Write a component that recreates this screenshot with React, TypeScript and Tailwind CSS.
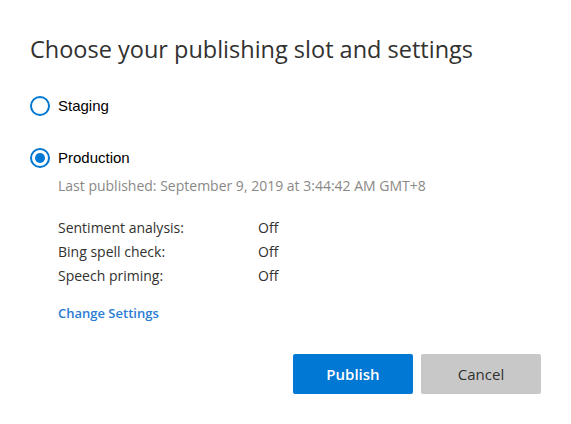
import React from 'react'

const SETTINGS = [
  { label: 'Sentiment analysis:', value: 'Off' },
  { label: 'Bing spell check:', value: 'Off' },
  { label: 'Speech priming:', value: 'Off' },
]

function Radio({ checked }: { checked: boolean }) {
  return (
    <span className="flex h-5 w-5 shrink-0 items-center justify-center rounded-full border-2 border-[#0078d4]">
      {checked && <span className="h-[10px] w-[10px] rounded-full bg-[#0078d4]" />}
    </span>
  )
}

export default function App() {
  return (
    <div className="h-[424px] w-[571px] bg-white px-[30px] pt-[33px] font-['Open_Sans',sans-serif] text-[#333]">
      <h1 className="text-[23.5px] leading-[32px] text-[#323130]">Choose your publishing slot and settings</h1>

      <div className="mt-[31px] flex h-5 items-center gap-[8px]">
        <Radio checked={false} />
        <span className="font-['Liberation_Sans',sans-serif] text-[15px] text-black">Staging</span>
      </div>

      <div className="mt-[32px] flex h-5 items-center gap-[8px]">
        <Radio checked />
        <span className="font-['Liberation_Sans',sans-serif] text-[15px] text-black">Production</span>
      </div>

      <div className="pl-[28px]">
        <p className="mt-[9px] text-[14px] leading-[18px] text-[#8a8886]">
          Last published: September 9, 2019 at 3:44:42 AM GMT+8
        </p>

        <div className="mt-[20px] flex flex-col">
          {SETTINGS.map((s) => (
            <div key={s.label} className="flex h-[24px] items-center text-[14px] text-[#323130]">
              <span className="w-[200px]">{s.label}</span>
              <span>{s.value}</span>
            </div>
          ))}
        </div>

        <button className="mt-[17px] block text-[13px] leading-[18px] font-semibold text-[#2b7cd3]">Change Settings</button>
      </div>

      <div className="mt-[32px] flex justify-end gap-[8px]">
        <button className="h-[40px] w-[120px] rounded-[2px] bg-[#0078d4] text-[15px] font-semibold text-white">
          Publish
        </button>
        <button className="h-[40px] w-[120px] rounded-[2px] bg-[#c8c8c8] text-[15px] text-[#323130]">
          Cancel
        </button>
      </div>
    </div>
  )
}
